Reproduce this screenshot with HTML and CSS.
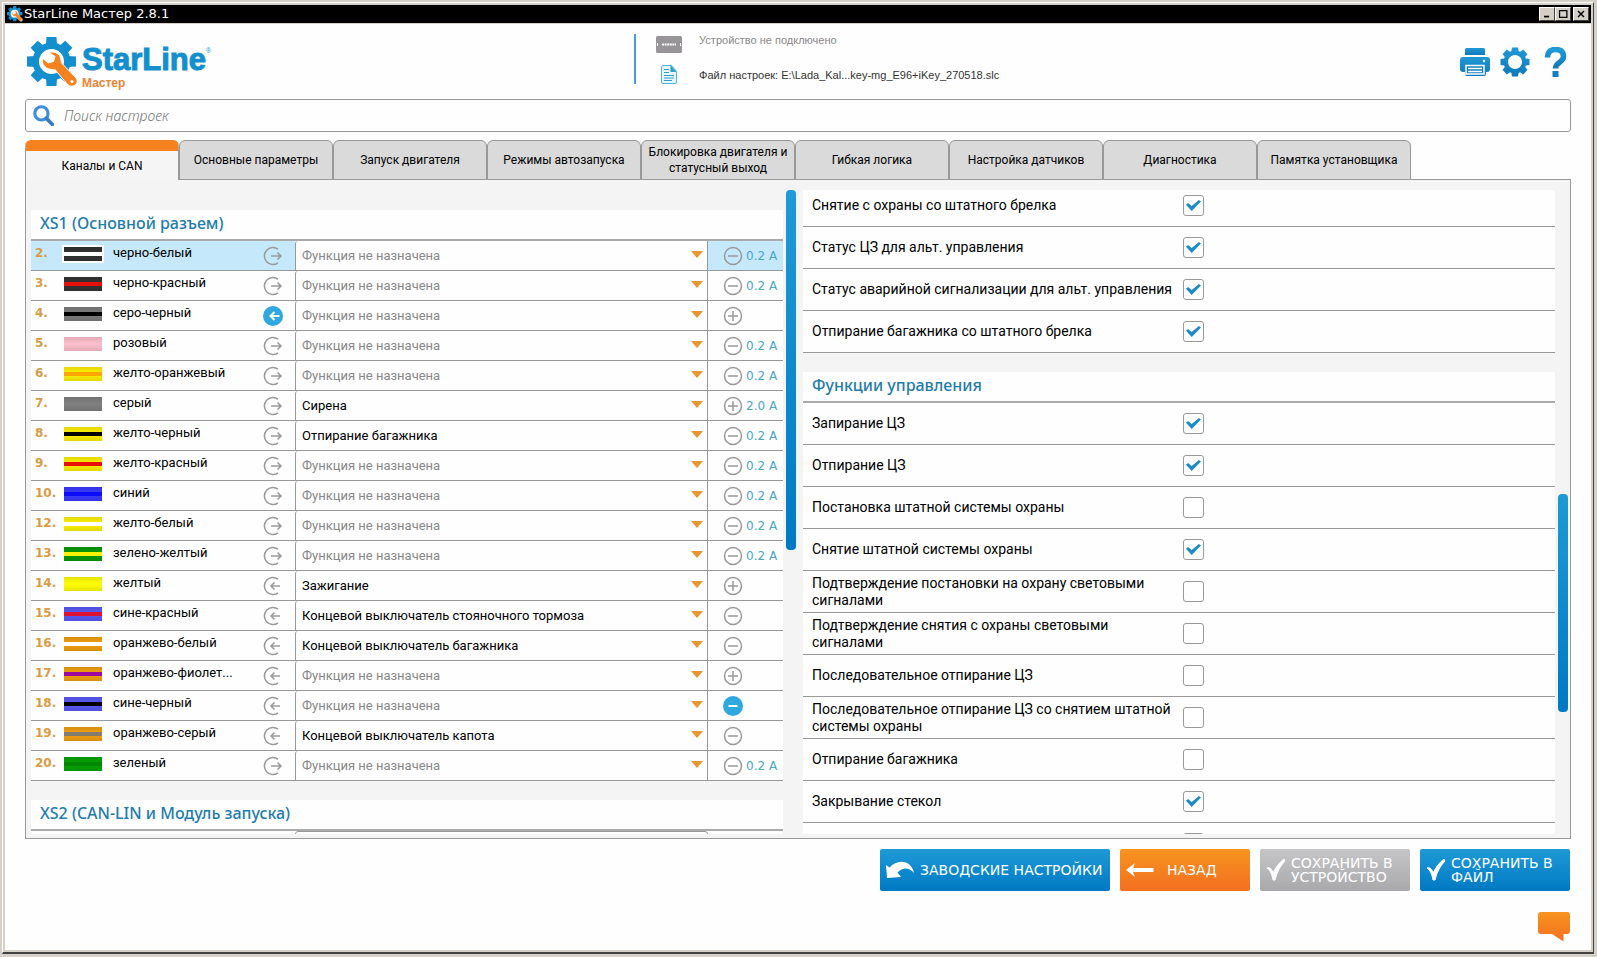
FILE: index.html
```html
<!DOCTYPE html>
<html lang="ru">
<head>
<meta charset="utf-8">
<title>StarLine Мастер 2.8.1</title>
<link rel="stylesheet" href="styles.css">
</head>
<body>
<svg class="defs" aria-hidden="true">
  <defs>
    <linearGradient id="blue" x1="0" y1="0" x2="0" y2="1"><stop offset="0" stop-color="#1f9ad6"/><stop offset="1" stop-color="#0f78b8"/></linearGradient>
    <linearGradient id="orange" x1="0" y1="0" x2="0" y2="1"><stop offset="0" stop-color="#f7941e"/><stop offset="1" stop-color="#f36f21"/></linearGradient>
    <symbol id="logo" viewBox="0 0 51 51">
      <g fill="#148fce">
        <circle cx="24.500" cy="24.500" r="19"/>
        <g id="teeth"><path d="M19 8 19.500 0h10l.5 8zM19 41l.5 8h10l.5-8z"/></g>
        <use href="#teeth" transform="rotate(45 24.5 24.5)"/>
        <use href="#teeth" transform="rotate(90 24.5 24.5)"/>
        <use href="#teeth" transform="rotate(135 24.5 24.5)"/>
      </g>
      <circle cx="24.500" cy="24.500" r="12.500" fill="#fff"/>
      <path d="M22 15.500c5-2 11.500 1 12 7.500 0 2 .5 3 1.500 4L49 41c4 5-3 11-8 7L30 35c-1-2-2-2.500-4-2.500-7 .5-12-5-10.500-11.500l5.500 5 5.500-1.500 1.500-5z" fill="#f5821f" stroke="#fff" stroke-width="1"/>
      <circle cx="45" cy="44.500" r="1.600" fill="#fff"/>
    </symbol>
    <symbol id="out" viewBox="0 0 20 20"><path d="M15 3.200A8.500 8.500 0 1 0 15 16.800" /><path d="M8 10h10M14.500 6.500 18 10l-3.500 3.500"/></symbol>
    <symbol id="in" viewBox="0 0 20 20"><path d="M15 3.200A8.500 8.500 0 1 0 15 16.800" /><path d="M17 10H8M11.500 6.500 8 10l3.500 3.500"/></symbol>
    <symbol id="in-on" viewBox="0 0 20 20"><circle cx="10" cy="10" r="10" fill="#2fa8df" stroke="none"/><path stroke="#fff" stroke-width="2" d="M16.500 10H8M11.500 6 7.500 10l4 4"/></symbol>
    <symbol id="minus" viewBox="0 0 20 20"><circle cx="10" cy="10" r="8.500"/><path d="M5 10h10"/></symbol>
    <symbol id="plus" viewBox="0 0 20 20"><circle cx="10" cy="10" r="8.500"/><path d="M5 10h10M10 5v10"/></symbol>
    <symbol id="minus-on" viewBox="0 0 20 20"><circle cx="10" cy="10" r="10" fill="#2fa8df" stroke="none"/><path stroke="#fff" stroke-width="2" d="M5.500 10h9"/></symbol>
  </defs>
</svg>
<div class="window">
  <header class="titlebar">
    <svg class="titlebar-icon" aria-hidden="true"><use href="#logo"/></svg>
    <h1 class="titlebar-text">StarLine Мастер 2.8.1</h1>
    <button class="winbtn" aria-label="Свернуть"><svg viewBox="0 0 15 14"><path d="M4 10h6" stroke="#000" stroke-width="2"/></svg></button>
    <button class="winbtn" aria-label="Развернуть"><svg viewBox="0 0 15 14"><path d="M3.500 3v8h8.500V3M3 3h9.500" fill="none" stroke="#000" stroke-width="1.500"/></svg></button>
    <button class="winbtn winbtn-close" aria-label="Закрыть"><svg viewBox="0 0 15 14"><path d="m4 3.500 7 7m0-7-7 7" stroke="#000" stroke-width="1.700"/></svg></button>
  </header>

  <main class="content">
    <div class="top">
      <div class="brand">
        <svg class="brand-gear" aria-hidden="true"><use href="#logo"/></svg>
        <div class="brand-words">
          <div class="brand-name">StarLine<sup class="brand-mark">®</sup></div>
          <div class="brand-sub">Мастер</div>
        </div>
      </div>
      <div class="status">
        <div class="status-row">
          <svg class="status-icon" viewBox="0 0 26 19" aria-hidden="true"><rect y="1" width="26" height="17" rx="1.500" fill="#979597"/><path d="M6 9.500h14" stroke="#fff" stroke-width="2" stroke-dasharray="2 .6"/><path d="M1.500 8v3M24.500 8v3" stroke="#fff"/></svg>
          <span class="status-off">Устройство не подключено</span>
        </div>
        <div class="status-row">
          <svg class="status-icon" viewBox="0 0 26 19" aria-hidden="true"><path d="M6.500.5h9l5 6v10.500a1.500 1.500 0 0 1-1.500 1.500H7A1.500 1.500 0 0 1 5.500 17V2z" fill="#e9f7fd" stroke="#4cb4dc"/><path d="M14.500 0v7h6z" fill="#2b9fcf"/><path d="M8 4.500h5M8 7.500h5M8 10.500h10M8 13h10M8 15.500h8" stroke="#2b9fcf"/></svg>
          <span class="status-file">Файл настроек: E:\Lada_Kal...key-mg_E96+iKey_270518.slc</span>
        </div>
      </div>
      <nav class="tools">
        <button class="tool" aria-label="Печать"><svg viewBox="0 0 30 30"><g fill="url(#blue)"><path d="M5 8V2.500Q5 1 6.500 1h17Q25 1 25 2.500V8z"/><path d="M3 10h24q3 0 3 3v9q0 3-3 3h-1v2q0 2-2 2H7q-2 0-2-2v-2H3q-3 0-3-3v-9q0-3 3-3z"/></g><path d="M6 18.500h18V27H6z" fill="#187fbb" stroke="#fff" stroke-width="1.500"/><path d="M8 21.500h14M8 24.500h14" stroke="#fff" stroke-width="1.300"/><circle cx="24" cy="14" r="1.200" fill="#fff"/></svg></button>
        <button class="tool" aria-label="Настройки"><svg viewBox="0 0 30 30"><g fill="url(#blue)"><path fill-rule="evenodd" d="M12 .5h6l.6 3.600 1.500.7 3-2.200 4.300 4.300-2.200 3 .7 1.500 3.600.6v6l-3.600.6-.7 1.500 2.200 3-4.300 4.300-3-2.200-1.500.7-.6 3.600h-6l-.6-3.600-1.500-.7-3 2.200-4.300-4.300 2.200-3-.7-1.500L.5 18v-6l3.600-.6.7-1.500-2.200-3 4.300-4.300 3 2.200 1.500-.7zM15 8a7 7 0 1 0 .01 0z"/></g></svg></button>
        <button class="tool" aria-label="Справка"><svg viewBox="0 0 30 30"><path d="M7.500 10.500C7.500 5 10.500 2.500 15.500 2.500s8 2 8 7c0 6-8 5.500-8 12" fill="none" stroke="url(#blue)" stroke-width="5.500"/><path d="M12.500 24h6v6h-6z" fill="#1380be"/></svg></button>
      </nav>
    </div>

    <label class="search">
      <svg class="search-icon" viewBox="0 0 20 20" aria-hidden="true"><circle cx="8" cy="8" r="6.300" fill="none" stroke="#3f8edb" stroke-width="3"/><path d="m13 13 5.500 5.500" stroke="#3a7ac6" stroke-width="3.500" stroke-linecap="round"/></svg>
      <input class="search-input" type="text" placeholder="Поиск настроек" aria-label="Поиск настроек">
    </label>

    <div class="tabs" role="tablist">
      <button class="tab tab-active" role="tab" aria-selected="true">Каналы и CAN</button>
      <button class="tab" role="tab">Основные параметры</button>
      <button class="tab" role="tab">Запуск двигателя</button>
      <button class="tab" role="tab">Режимы автозапуска</button>
      <button class="tab" role="tab">Блокировка двигателя и статусный выход</button>
      <button class="tab" role="tab">Гибкая логика</button>
      <button class="tab" role="tab">Настройка датчиков</button>
      <button class="tab" role="tab">Диагностика</button>
      <button class="tab" role="tab">Памятка установщика</button>
    </div>

    <div class="panel">
      <section class="list list-pins">
        <h2 class="list-title">XS1 (Основной разъем)</h2>
        <table class="pins">
          <colgroup><col class="c-num"><col class="c-wire"><col class="c-name"><col class="c-dir"><col><col class="c-pol"></colgroup>
          <tbody id="pins"></tbody>
        </table>
        <h2 class="list-title list-title-next">XS2 (CAN-LIN и Модуль запуска)</h2>
        <table class="pins">
          <colgroup><col class="c-num"><col class="c-wire"><col class="c-name"><col class="c-dir"><col><col class="c-pol"></colgroup>
          <tbody><tr><td></td><td></td><td></td><td></td><td class="pin-func pin-func-first"></td><td></td></tr></tbody>
        </table>
      </section>
      <div class="track track-left"><div class="thumb"></div></div>
      <section class="list list-options">
        <div class="options" id="status-options"></div>
        <h2 class="list-title list-title-next">Функции управления</h2>
        <div class="options" id="control-options"></div>
      </section>
      <div class="track track-right"><div class="thumb"></div></div>
    </div>

    <footer class="actions">
      <button class="action action-reset"><svg viewBox="0 0 28 18"><path d="M0 4l3.500 2.500C11-2 25-2 28 12c-5-6-11-6-16.500-.5L15 16l-14 1z" fill="#fff"/></svg><span>ЗАВОДСКИЕ НАСТРОЙКИ</span></button>
      <button class="action action-back"><svg viewBox="0 0 28 18"><path d="M0 9l9-7-2 5h20.500v4H7l2 5z" fill="#fff"/></svg><span>НАЗАД</span></button>
      <button class="action action-save action-off" disabled><svg viewBox="0 0 18 22"><path d="M0 9c3-1 5 1 6 5C9 8 12 4 17 0l1 2C13 7 10 13 8 21H6C5 15 3 11 0 9z" fill="#fff" stroke="#fff"/></svg><span>СОХРАНИТЬ В УСТРОЙСТВО</span></button>
      <button class="action action-save"><svg viewBox="0 0 18 22"><path d="M0 9c3-1 5 1 6 5C9 8 12 4 17 0l1 2C13 7 10 13 8 21H6C5 15 3 11 0 9z" fill="#fff" stroke="#fff"/></svg><span>СОХРАНИТЬ В ФАЙЛ</span></button>
    </footer>
    <button class="chat" aria-label="Обратная связь"><svg viewBox="0 0 32 30"><path d="M3 0h26q3 0 3 3v16q0 3-3 3h-3.500v7.500L14 22H3q-3 0-3-3V3q0-3 3-3z" fill="url(#orange)"/></svg></button>
  </main>
</div>
<script src="app.js"></script>
</body>
</html>
```
FILE: styles.css
```css
* { box-sizing: border-box; }

body {
  margin: 0;
  background: #d4d0c8;
  font-family: Roboto, "Noto Sans", sans-serif;
  font-size: 13px;
  color: #000;
}

button {
  margin: 0;
  padding: 0;
  border: 0;
  background: none;
  font: inherit;
  color: inherit;
}

.defs { position: absolute; width: 0; height: 0; }

.window {
  display: flex;
  flex-direction: column;
  height: calc(100vh - 5px);
  min-height: 600px;
  margin: 2px 3px 3px 2px;
  padding: 2px;
  border: 1px solid #fff;
  border-right-color: #404040;
  border-bottom: 2px solid #404040;
  background: #d4d0c8;
}

.titlebar {
  display: flex;
  align-items: center;
  flex: none;
  height: 18px;
  padding: 0 2px;
  background: #000;
  color: #fff;
}
.titlebar-icon { width: 16px; height: 16px; }
.titlebar-text {
  flex: 1;
  margin: 0 0 0 1px;
  font: 13px/18px "DejaVu Sans", sans-serif;
}
.winbtn {
  width: 16px;
  height: 14px;
  background: #d4d0c8;
  border: 1px solid #fff;
  border-right-color: #404040;
  border-bottom-color: #404040;
}
.winbtn-close { margin-left: 2px; }
.winbtn svg { display: block; width: 100%; height: 100%; }

.content {
  display: flex;
  flex-direction: column;
  flex: 1;
  min-height: 0;
  margin-top: 1px;
  padding: 10px 20px 8px;
  background: #fefefe;
}

.top { display: flex; flex: none; height: 65px; }
.brand { display: flex; flex: 0 0 39.4%; padding: 3px 0 0 2px; }
.brand-gear { width: 51px; height: 51px; }
.brand-words { padding: 6px 0 0 4px; }
.brand-name {
  font: bold 31px/34px "Liberation Sans", sans-serif;
  color: #148fce;
  -webkit-text-stroke: 1px #148fce;
}
.brand-mark {
  font-size: 7px;
  font-weight: normal;
  line-height: 7px;
  vertical-align: 17px;
  -webkit-text-stroke: 0;
}
.brand-sub { font: bold 12px/12px "Liberation Sans", sans-serif; color: #ee8336; }
.status {
  display: flex;
  flex-direction: column;
  justify-content: space-between;
  flex: 1;
  height: 50px;
  padding-left: 20px;
  border-left: 2px solid #3fa2d2;
  font: 11px/12px "Liberation Sans", sans-serif;
}
.status-row { display: flex; align-items: center; gap: 17px; }
.status-icon { width: 26px; height: 19px; }
.status-off { padding-bottom: 8px; color: #888; }
.status-file { color: #333; }
.tools {
  display: flex;
  justify-content: flex-end;
  gap: 10px;
  padding: 13px 1px 0 0;
}
.tool { width: 30px; height: 30px; }
.tool svg { display: block; width: 30px; height: 30px; }

.search {
  display: flex;
  align-items: center;
  flex: none;
  gap: 8px;
  height: 33px;
  padding: 0 7px;
  border: 1px solid #999;
  border-radius: 3px;
}
.search-icon { width: 21px; height: 21px; }
.search-input {
  flex: 1;
  border: 0;
  outline: 0;
  background: none;
  font: italic 300 14px/20px "Noto Sans", sans-serif;
}
.search-input::placeholder { color: #777; opacity: 1; }

.tabs {
  display: flex;
  flex: none;
  z-index: 1;
  margin: 8px 160px 0 0;
}
.tab {
  flex: 1 1 0;
  height: 40px;
  border: 1px solid #999;
  border-radius: 6px 6px 0 0;
  background: #dadada;
  font-size: 12px;
  line-height: 16px;
}
.tab-active {
  border-top: 11px solid #f5821f;
  border-bottom: 0;
  background: #f5f5f5;
}

.panel {
  display: flex;
  flex: 1;
  min-height: 0;
  margin-top: -1px;
  padding: 10px 0 4px 5px;
  border: 1px solid #999;
  background: #f5f4f5;
}
.list { flex: 1 1 0; min-width: 0; overflow: hidden; }
.list-pins { padding-top: 20px; }
.list-title {
  margin: 0;
  padding: 0 9px;
  height: 31px;
  border-bottom: 2px solid #aaa;
  background: #fefefe;
  font: 500 16px/27px "Noto Sans", sans-serif;
  color: #1f7cab;
}
.list-title-next { margin-top: 19px; }

.track { flex: none; }
.track-left { width: 20px; padding: 0 7px 0 3px; }
.track-right { display: grid; grid-template-rows: 304fr 217fr 122fr; width: 15px; padding: 0 2px 0 3px; }
.thumb { height: 360px; border-radius: 4px; background: linear-gradient(#1f9ad6, #0079c4); }
.track-right .thumb { grid-row: 2; height: auto; }

.pins {
  width: 100%;
  table-layout: fixed;
  border-collapse: separate;
  border-spacing: 0;
  background: #fefefe;
}
.c-num { width: 33px; }
.c-wire { width: 49px; }
.c-name { width: 141px; }
.c-dir { width: 41px; }
.c-pol { width: 75px; }
.pins td {
  height: 30px;
  padding: 0;
  border-bottom: 1px solid #999;
  vertical-align: top;
}
.pin-on td { background: #c5e8fb; }
.pins .pin-num {
  padding-left: 4px;
  font: bold 12px/24px "DejaVu Sans", sans-serif;
  color: #d99c45;
}
.wire {
  display: flex;
  align-items: center;
  width: 38px;
  height: 14px;
  margin-top: 6px;
  box-shadow: 0 0 0 2px #fefefe;
  background-image: linear-gradient(#0000001c, #0000, #0000001c);
}
.stripe { width: 100%; height: 4px; }
.pins .pin-name { line-height: 24px; white-space: nowrap; }
.icon-btn { display: block; width: 20px; height: 20px; }
.icon-btn svg {
  display: block;
  width: 20px;
  height: 20px;
  fill: none;
  stroke: #999;
  stroke-width: 1.5;
}
.pins .pin-dir { padding: 5px 0 0 9px; }
.pins .pin-func {
  border-left: 1px solid #999;
  border-right: 1px solid #999;
  border-top-left-radius: 3px;
  background: #fefefe;
}
.pins .pin-func-first { border-top: 1px solid #999; border-radius: 3px; }
.func { display: grid; align-items: center; height: 29px; }
.func::after {
  content: "";
  grid-area: 1 / 1;
  justify-self: end;
  width: 12px;
  height: 7px;
  margin: 0 4px 2px 0;
  background: #e8962e;
  clip-path: polygon(0 0, 100% 0, 50% 100%);
  pointer-events: none;
}
.func-select {
  grid-area: 1 / 1;
  width: 100%;
  height: 29px;
  padding: 0 20px 0 6px;
  border: 0;
  background: none;
  appearance: none;
  font: inherit;
  color: #000;
}
.func-empty { color: #888; }
.pol { display: flex; align-items: center; gap: 3px; padding: 5px 0 0 15px; }
.amps { font: 12px/20px "DejaVu Sans", sans-serif; color: #4aa5c8; }

.list-options .options:first-child { margin-top: -5px; }
.option {
  display: grid;
  grid-template-columns: 1fr 1fr;
  align-items: center;
  height: 42px;
  border-bottom: 1px solid #999;
  background: #fefefe;
}
.option-label { padding: 0 0 0 9px; font-size: 14px; line-height: 17px; }
.option-box {
  display: grid;
  place-items: center;
  appearance: none;
  width: 21px;
  height: 21px;
  margin: 0 0 0 4px;
  border: 1px solid #999;
  border-radius: 3px;
  background: #fff;
}
.option-box:checked::after {
  content: "";
  width: 15px;
  height: 11px;
  background: #1f8bc6;
  clip-path: polygon(0 44%, 14% 27%, 38% 54%, 86% 0, 100% 14%, 38% 100%);
}

.actions {
  display: flex;
  flex: none;
  justify-content: flex-end;
  gap: 10px;
  margin-top: 10px;
  padding-right: 1px;
}
.action {
  display: flex;
  align-items: center;
  height: 42px;
  padding: 0 5px;
  border-radius: 2px;
  background: linear-gradient(#1f9ad6, #0079c4);
  font: 14px/14px "DejaVu Sans", sans-serif;
  color: #fff;
  text-align: left;
}
.action svg { flex: none; width: 30px; height: 18px; }
.action-reset { width: 230px; gap: 5px; white-space: nowrap; }
.action-back { width: 130px; gap: 12px; background: linear-gradient(#f7941e, #f36f21); }
.action-save { width: 150px; gap: 6px; padding: 0 7px; }
.action-save svg { width: 18px; height: 22px; }
.action-off { background: linear-gradient(#c6c6c8, #a9a9ab); }

.chat { flex: none; align-self: flex-end; width: 32px; height: 30px; margin: 21px 1px 0 0; }
.chat svg { display: block; width: 32px; height: 30px; }
```
FILE: app.js
```js
const EMPTY = 'Функция не назначена';

// [number, name, wire colour, stripe colour, direction, function, polarity, current]
const pins = [
  ['2.', 'черно-белый', '#333', '#fff', 'out', '', 'minus', '0.2 A'],
  ['3.', 'черно-красный', '#333', '#e8100c', 'out', '', 'minus', '0.2 A'],
  ['4.', 'серо-черный', '#7d7d7d', '#000', 'in-on', '', 'plus', ''],
  ['5.', 'розовый', '#fdbfcc', '', 'out', '', 'minus', '0.2 A'],
  ['6.', 'желто-оранжевый', '#fff200', '#ffa500', 'out', '', 'minus', '0.2 A'],
  ['7.', 'серый', '#808080', '', 'out', 'Сирена', 'plus', '2.0 A'],
  ['8.', 'желто-черный', '#fff200', '#000', 'out', 'Отпирание багажника', 'minus', '0.2 A'],
  ['9.', 'желто-красный', '#fff200', '#e8100c', 'out', '', 'minus', '0.2 A'],
  ['10.', 'синий', '#3a3aff', '#0c0cff', 'out', '', 'minus', '0.2 A'],
  ['12.', 'желто-белый', '#fff200', '#fff', 'out', '', 'minus', '0.2 A'],
  ['13.', 'зелено-желтый', '#0a9a0a', '#fff200', 'out', '', 'minus', '0.2 A'],
  ['14.', 'желтый', '#ffff00', '', 'in', 'Зажигание', 'plus', ''],
  ['15.', 'сине-красный', '#5a5af5', '#e01030', 'in', 'Концевой выключатель стояночного тормоза', 'minus', ''],
  ['16.', 'оранжево-белый', '#f2a010', '#fff', 'in', 'Концевой выключатель багажника', 'minus', ''],
  ['17.', 'оранжево-фиолет...', '#f2a010', '#9a0aa0', 'in', '', 'plus', ''],
  ['18.', 'сине-черный', '#5a5af5', '#000', 'in', '', 'minus-on', ''],
  ['19.', 'оранжево-серый', '#f2a010', '#857c70', 'in', 'Концевой выключатель капота', 'minus', ''],
  ['20.', 'зеленый', '#05a505', '#008500', 'out', '', 'minus', '0.2 A'],
];

const statusOptions = [
  ['Снятие с охраны со штатного брелка', true],
  ['Статус ЦЗ для альт. управления', true],
  ['Статус аварийной сигнализации для альт. управления', true],
  ['Отпирание багажника со штатного брелка', true],
];

const controlOptions = [
  ['Запирание ЦЗ', true],
  ['Отпирание ЦЗ', true],
  ['Постановка штатной системы охраны', false],
  ['Снятие штатной системы охраны', true],
  ['Подтверждение постановки на охрану световыми сигналами', false],
  ['Подтверждение снятия с охраны световыми сигналами', false],
  ['Последовательное отпирание ЦЗ', false],
  ['Последовательное отпирание ЦЗ со снятием штатной системы охраны', false],
  ['Отпирание багажника', false],
  ['Закрывание стекол', true],
  ['', false],
];

const icon = (id, label) =>
  `<button class="icon-btn" aria-label="${label}"><svg><use href="#${id}"/></svg></button>`;

document.getElementById('pins').innerHTML = pins.map(([num, name, wire, stripe, dir, func, pol, amps], i) => `
  <tr class="${i === 0 ? 'pin-on' : ''}">
    <td class="pin-num">${num}</td>
    <td><div class="wire" style="background-color:${wire}"><div class="stripe" style="background:${stripe || 'none'}"></div></div></td>
    <td class="pin-name">${name}</td>
    <td class="pin-dir">${icon(dir, 'Направление')}</td>
    <td class="pin-func"><div class="func"><select class="func-select ${func ? '' : 'func-empty'}" aria-label="Функция: ${name}"><option>${func || EMPTY}</option></select></div></td>
    <td><div class="pol">${icon(pol, 'Полярность')}<span class="amps">${amps}</span></div></td>
  </tr>`).join('');

const renderOptions = (id, options) => {
  document.getElementById(id).innerHTML = options.map(([text, on], i) => `
    <div class="option">
      <label class="option-label" for="${id}-${i}">${text}</label>
      <input class="option-box" type="checkbox" id="${id}-${i}" ${on ? 'checked' : ''}>
    </div>`).join('');
};
renderOptions('status-options', statusOptions);
renderOptions('control-options', controlOptions);
```
